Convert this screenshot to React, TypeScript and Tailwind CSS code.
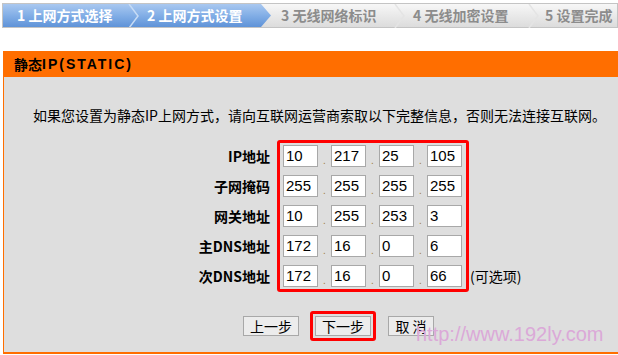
import React from "react";

const cjk = { fontFamily: '"Noto Sans CJK SC", "Liberation Sans", sans-serif' };
const latin = { fontFamily: '"Liberation Sans", "Noto Sans CJK SC", sans-serif' };

const Chevron = ({ color }: { color: string }) => (
  <svg width="14" height="24" viewBox="0 0 14 24" className="shrink-0">
    <polyline points="2,0 11,12 2,24" fill="none" stroke={color} strokeWidth="1.5" />
  </svg>
);

const rows = [
  { label: "IP地址", values: ["10", "217", "25", "105"] },
  { label: "子网掩码", values: ["255", "255", "255", "255"] },
  { label: "网关地址", values: ["10", "255", "253", "3"] },
  { label: "主DNS地址", values: ["172", "16", "0", "6"] },
  { label: "次DNS地址", values: ["172", "16", "0", "66"] },
];

export default function App() {
  return (
    <div className="relative w-[618px] h-[355px] overflow-hidden bg-white" style={cjk}>
      {/* Steps bar */}
      <div className="ml-[2px] mt-[3px] flex h-[25px] w-[616px] items-center border border-[#c4c4c4] bg-gradient-to-b from-[#f7f7f7] to-[#dcdcdc] text-[14px] font-bold text-[#8c8c8c]">
        <div
          className="flex h-full w-[268px] shrink-0 items-center bg-gradient-to-b from-[#a9c8f0] via-[#82aee6] to-[#5f93d8] text-white"
          style={{ clipPath: "polygon(0 0, 258px 0, 268px 50%, 258px 100%, 0 100%)" }}
        >
          <span className="ml-[14px] w-[110px]">1 上网方式选择</span>
          <Chevron color="#c6dbf5" />
          <span className="ml-[6px]">2 上网方式设置</span>
        </div>
        <span className="ml-[10px] w-[112px]">3 无线网络标识</span>
        <Chevron color="#e4e4e4" />
        <span className="ml-[6px] w-[114px]">4 无线加密设置</span>
        <Chevron color="#e4e4e4" />
        <span className="ml-[4px]">5 设置完成</span>
      </div>

      {/* Panel */}
      <div className="ml-[3px] mt-[23px] w-[615px] border-b-2 border-l border-[#ff6e00]">
        <div className="flex h-[26px] items-center bg-[#ff6e00] pl-[10px] text-[14px] font-bold text-black">
          静态<span className="tracking-[2px]" style={latin}>IP(STATIC)</span>
        </div>
        <div className="h-[275px] bg-[#dedede] pt-[27px] text-black">
          <p className="pl-[29px] text-[14px] leading-[22px]">
            如果您设置为静态IP上网方式，请向互联网运营商索取以下完整信息，否则无法连接互联网。
          </p>

          <div className="mt-[14px] flex">
            <div className="mr-[7px] flex w-[266px] flex-col gap-[8px] pt-[5px] text-right text-[14px] font-bold">
              {rows.map((r) => (
                <div key={r.label} className="flex h-[22px] items-center justify-end">
                  {r.label}
                </div>
              ))}
            </div>
            <div className="flex w-[192px] flex-col gap-[8px] rounded-[3px] border-[3px] border-[#ff0000] py-[2px] pl-[3px]">
              {rows.map((r) => (
                <div key={r.label} className="flex h-[22px] items-center">
                  {r.values.map((v, i) => (
                    <React.Fragment key={i}>
                      {i > 0 && (
                        <span className="flex w-[13px] justify-center pt-[8px] text-[10px] text-[#a08040]" style={latin}>
                          .
                        </span>
                      )}
                      <div
                        className="flex h-[22px] w-[35px] items-center border border-[#a8a8a8] bg-white pl-[2px] text-[15px] text-black"
                        style={latin}
                      >
                        {v}
                      </div>
                    </React.Fragment>
                  ))}
                </div>
              ))}
            </div>
            <div className="flex flex-col justify-end pb-[5px] pl-px text-[14px]">
              <div className="flex h-[22px] items-center">(可选项)</div>
            </div>
          </div>

          <div className="mt-[19px] flex items-center">
            <button className="ml-[239px] flex h-[20px] w-[56px] items-center justify-center border border-[#a8a8a8] bg-[#ececec] text-[14px]">
              上一步
            </button>
            <div className="ml-[11px] rounded-[3px] border-[3px] border-[#ff0000] p-[2px]">
              <button className="flex h-[20px] w-[56px] items-center justify-center border border-[#a8a8a8] bg-[#ececec] text-[14px]">
                下一步
              </button>
            </div>
            <button className="ml-[12px] flex h-[20px] w-[46px] items-center justify-center border border-[#a8a8a8] bg-[#ececec] text-[14px]">
              取 消
            </button>
          </div>
        </div>
      </div>

      <div
        className="absolute left-[416px] top-[322px] text-[20px] leading-[24px] text-[#dba9d8]"
        style={latin}
      >
        http://www.192ly.com
      </div>
    </div>
  );
}
